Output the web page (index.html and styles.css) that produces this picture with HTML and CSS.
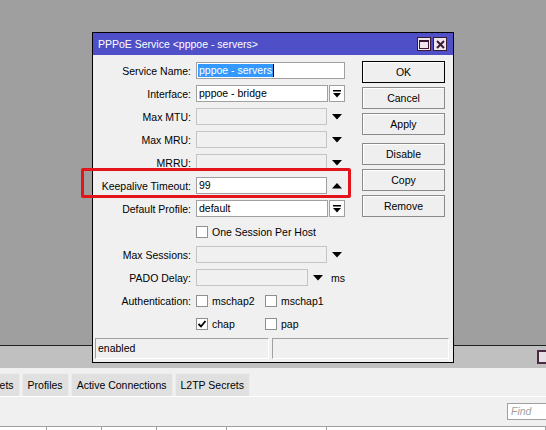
FILE: index.html
```html
<!DOCTYPE html>
<html lang="en">
<head>
    <meta charset="UTF-8">
    <meta name="viewport" content="width=device-width, initial-scale=1.0">
    <title>PPPoE Service</title>
    <link rel="stylesheet" href="styles.css">
</head>
<body>
    <div class="desktop">
        <div class="dialog">
            <div class="titlebar">
                <span class="title">PPPoE Service &lt;pppoe - servers&gt;</span>
                <div class="title-buttons">
                    <span class="tbtn">
                        <svg width="10" height="9" viewBox="0 0 10 9"><rect x="0.5" y="0.5" width="9" height="8" fill="none" stroke="#3a1a34"/><rect x="0" y="0" width="10" height="2" fill="#3a1a34"/></svg>
                    </span>
                    <span class="tbtn">
                        <svg width="9" height="9" viewBox="0 0 9 9"><path d="M1 1 L8 8 M8 1 L1 8" stroke="#3a1a34" stroke-width="2"/></svg>
                    </span>
                </div>
            </div>

            <div class="dialog-body">
                <div class="form">
                    <label>Service Name:</label>
                    <div class="field">
                        <div class="input full"><span class="selected">pppoe - servers</span><span class="caret"></span></div>
                    </div>

                    <label>Interface:</label>
                    <div class="field">
                        <div class="input">pppoe - bridge</div>
                        <span class="drop-btn"><svg width="8" height="8" viewBox="0 0 8 8"><rect x="0" y="0" width="8" height="1.5" fill="#000"/><polygon points="0,3 8,3 4,7.5" fill="#000"/></svg></span>
                    </div>

                    <label>Max MTU:</label>
                    <div class="field">
                        <div class="input disabled"></div>
                        <span class="arrow"><svg width="10" height="6" viewBox="0 0 10 6"><polygon points="0,0 10,0 5,5.5" fill="#000"/></svg></span>
                    </div>

                    <label>Max MRU:</label>
                    <div class="field">
                        <div class="input disabled"></div>
                        <span class="arrow"><svg width="10" height="6" viewBox="0 0 10 6"><polygon points="0,0 10,0 5,5.5" fill="#000"/></svg></span>
                    </div>

                    <label>MRRU:</label>
                    <div class="field">
                        <div class="input disabled"></div>
                        <span class="arrow"><svg width="10" height="6" viewBox="0 0 10 6"><polygon points="0,0 10,0 5,5.5" fill="#000"/></svg></span>
                    </div>

                    <label>Keepalive Timeout:</label>
                    <div class="field">
                        <div class="input">99</div>
                        <span class="arrow"><svg width="10" height="6" viewBox="0 0 10 6"><polygon points="0,5.5 10,5.5 5,0" fill="#000"/></svg></span>
                    </div>

                    <label>Default Profile:</label>
                    <div class="field">
                        <div class="input">default</div>
                        <span class="drop-btn"><svg width="8" height="8" viewBox="0 0 8 8"><rect x="0" y="0" width="8" height="1.5" fill="#000"/><polygon points="0,3 8,3 4,7.5" fill="#000"/></svg></span>
                    </div>

                    <span></span>
                    <div class="field">
                        <span class="check"></span><span class="check-label">One Session Per Host</span>
                    </div>

                    <label>Max Sessions:</label>
                    <div class="field">
                        <div class="input disabled"></div>
                        <span class="arrow"><svg width="10" height="6" viewBox="0 0 10 6"><polygon points="0,0 10,0 5,5.5" fill="#000"/></svg></span>
                    </div>

                    <label>PADO Delay:</label>
                    <div class="field">
                        <div class="input disabled short"></div>
                        <span class="arrow"><svg width="10" height="6" viewBox="0 0 10 6"><polygon points="0,0 10,0 5,5.5" fill="#000"/></svg></span>
                        <span class="unit">ms</span>
                    </div>

                    <label>Authentication:</label>
                    <div class="field">
                        <div class="option"><span class="check"></span><span class="check-label">mschap2</span></div>
                        <div class="option"><span class="check"></span><span class="check-label">mschap1</span></div>
                    </div>

                    <span></span>
                    <div class="field">
                        <div class="option">
                            <span class="check"><svg width="10" height="10" viewBox="0 0 10 10"><path d="M1.5 5 L4 7.5 L8.5 2" fill="none" stroke="#000" stroke-width="1.8"/></svg></span>
                            <span class="check-label">chap</span>
                        </div>
                        <div class="option"><span class="check"></span><span class="check-label">pap</span></div>
                    </div>
                </div>

                <div class="actions">
                    <button class="btn default">OK</button>
                    <button class="btn">Cancel</button>
                    <button class="btn">Apply</button>
                    <button class="btn spaced">Disable</button>
                    <button class="btn">Copy</button>
                    <button class="btn">Remove</button>
                </div>
            </div>

            <div class="statusbar">
                <div class="panel first">enabled</div>
                <div class="panel"></div>
            </div>
        </div>

        <!-- red marker round the keepalive row -->
        <div class="highlight"></div>
    </div>

    <div class="ppp-window">
        <div class="ppp-titlebar">
            <span class="ppp-icon"></span>
        </div>
        <div class="tabs">
            <span class="tab cut">Secrets</span>
            <span class="tab">Profiles</span>
            <span class="tab">Active Connections</span>
            <span class="tab">L2TP Secrets</span>
        </div>
        <div class="toolbar">
            <div class="find">Find</div>
        </div>
        <div class="table-head">
            <span></span><span></span><span></span><span></span><span></span><span></span>
        </div>
    </div>
</body>
</html>
```

FILE: styles.css
```css
body {
    margin: 0;
    width: 546px;
    height: 430px;
    overflow: hidden;
    font-family: "Liberation Sans", Arial, sans-serif;
    font-size: 10.5px;
    color: #000;
    background-color: #f0f0f0;
}

.desktop {
    position: relative;
    height: 345px;
    background-color: #9f9f9f;
}

/* dialog window */
.dialog {
    position: absolute;
    left: 92px;
    top: 32px;
    z-index: 2;
    width: 362px;
    height: 331px;
    box-sizing: border-box;
    border: 1px solid #000;
    background-color: #f0f0f0;
    display: flex;
    flex-direction: column;
}

.titlebar {
    height: 22px;
    flex-shrink: 0;
    background-color: #4f4fc7;
    color: #fff;
    display: flex;
    align-items: center;
    justify-content: space-between;
    padding: 0 6px 0 5px;
}

.title {
    font-size: 10.5px;
}

.title-buttons {
    display: flex;
    gap: 2px;
}

.tbtn {
    width: 14px;
    height: 14px;
    box-sizing: border-box;
    border: 1px solid #3a1a34;
    background-color: #efe6ee;
    display: flex;
    align-items: center;
    justify-content: center;
}

.dialog-body {
    flex: 1;
    display: flex;
}

.form {
    display: grid;
    grid-template-columns: 98px 149px;
    grid-auto-rows: 23px;
    column-gap: 5px;
    align-content: start;
    padding-top: 4px;
}

.form label {
    text-align: right;
    align-self: center;
    white-space: nowrap;
}

.field {
    display: flex;
    align-items: center;
}

.input {
    width: 132px;
    height: 17px;
    box-sizing: border-box;
    border: 1px solid #a0a0a0;
    background-color: #fff;
    padding-left: 2px;
    line-height: 15px;
    white-space: nowrap;
    overflow: hidden;
}

.input.full {
    width: 149px;
    padding-left: 1px;
    display: flex;
    align-items: center;
}

.input.disabled {
    background-color: #f0f0f0;
    border-color: #c4c4c4;
}

.input.short {
    width: 113px;
}

.selected {
    background-color: #3399ff;
    color: #fff;
    padding: 0 1px;
    line-height: 13px;
}

.caret {
    width: 1px;
    height: 13px;
    background-color: #000;
}

.drop-btn {
    width: 16px;
    height: 17px;
    box-sizing: border-box;
    margin-left: 1px;
    border: 1px solid #a0a0a0;
    background-color: #fff;
    display: flex;
    align-items: center;
    justify-content: center;
}

.arrow {
    width: 17px;
    display: flex;
    justify-content: center;
    margin-left: 1px;
}

.unit {
    margin-left: 5px;
}

.check {
    width: 12px;
    height: 12px;
    box-sizing: border-box;
    border: 1px solid #8e8f8f;
    background-color: #fff;
    display: flex;
    align-items: center;
    justify-content: center;
    flex-shrink: 0;
}

.check-label {
    margin-left: 4px;
    white-space: nowrap;
}

.option {
    width: 69px;
    display: flex;
    align-items: center;
}

/* buttons on the right */
.actions {
    width: 83px;
    margin-left: 17px;
    padding-top: 6px;
    display: flex;
    flex-direction: column;
    gap: 4px;
}

.btn {
    height: 22px;
    box-sizing: border-box;
    border: 1px solid #8a8a8a;
    background-color: #efefef;
    font-family: inherit;
    font-size: 10.5px;
    color: #000;
    padding: 0;
    box-shadow: inset 1px 1px 0 #fff;
}

.btn.default {
    border-color: #000;
}

.btn.spaced {
    margin-top: 4px;
}

.statusbar {
    height: 21px;
    flex-shrink: 0;
    display: flex;
    gap: 3px;
    margin: 0 4px 3px 2px;
}

.panel {
    flex: 1;
    box-sizing: border-box;
    border-top: 1px solid #a0a0a0;
    border-left: 1px solid #a0a0a0;
    border-bottom: 1px solid #fff;
    border-right: 1px solid #fff;
    padding-left: 2px;
    line-height: 19px;
}

.panel.first {
    flex: 0 0 174px;
}

.highlight {
    position: absolute;
    left: 81px;
    top: 168px;
    width: 270px;
    height: 30px;
    box-sizing: border-box;
    border: 3px solid #e3141b;
    border-radius: 2px;
    z-index: 3;
}

/* PPP window behind the dialog */
.ppp-window {
    background-color: #f0f0f0;
}

.ppp-titlebar {
    height: 22px;
    border-top: 1px solid #222;
    background-color: #c0c0c0;
    display: flex;
    justify-content: flex-end;
    align-items: center;
}

.ppp-icon {
    width: 14px;
    height: 14px;
    box-sizing: border-box;
    border: 2px solid #4a2a40;
    background-color: #e6dfe4;
    margin-right: -5px;
}

.tabs {
    display: flex;
    gap: 2px;
    padding-top: 5px;
    height: 23px;
    border-bottom: 1px solid #fff;
}

.tab {
    height: 23px;
    box-sizing: border-box;
    padding: 0 5px;
    line-height: 22px;
    background-color: #e0e0e0;
    border: 1px solid #ececec;
    border-bottom: none;
    white-space: nowrap;
}

.tab.cut {
    margin-left: -28px;
}

.toolbar {
    height: 29px;
    display: flex;
    justify-content: flex-end;
    align-items: flex-start;
}

.find {
    width: 48px;
    height: 17px;
    margin-top: 6px;
    margin-right: -9px;
    box-sizing: border-box;
    border: 1px solid #a0a0a0;
    background-color: #fff;
    color: #a0a0a0;
    font-style: italic;
    padding-left: 3px;
    line-height: 15px;
}

.table-head {
    display: grid;
    grid-template-columns: 47px 55px 55px 70px 100px 1fr;
    height: 10px;
    border-top: 1px solid #a0a0a0;
    background-color: #fff;
}

.table-head span {
    border-right: 1px solid #a0a0a0;
}
```
